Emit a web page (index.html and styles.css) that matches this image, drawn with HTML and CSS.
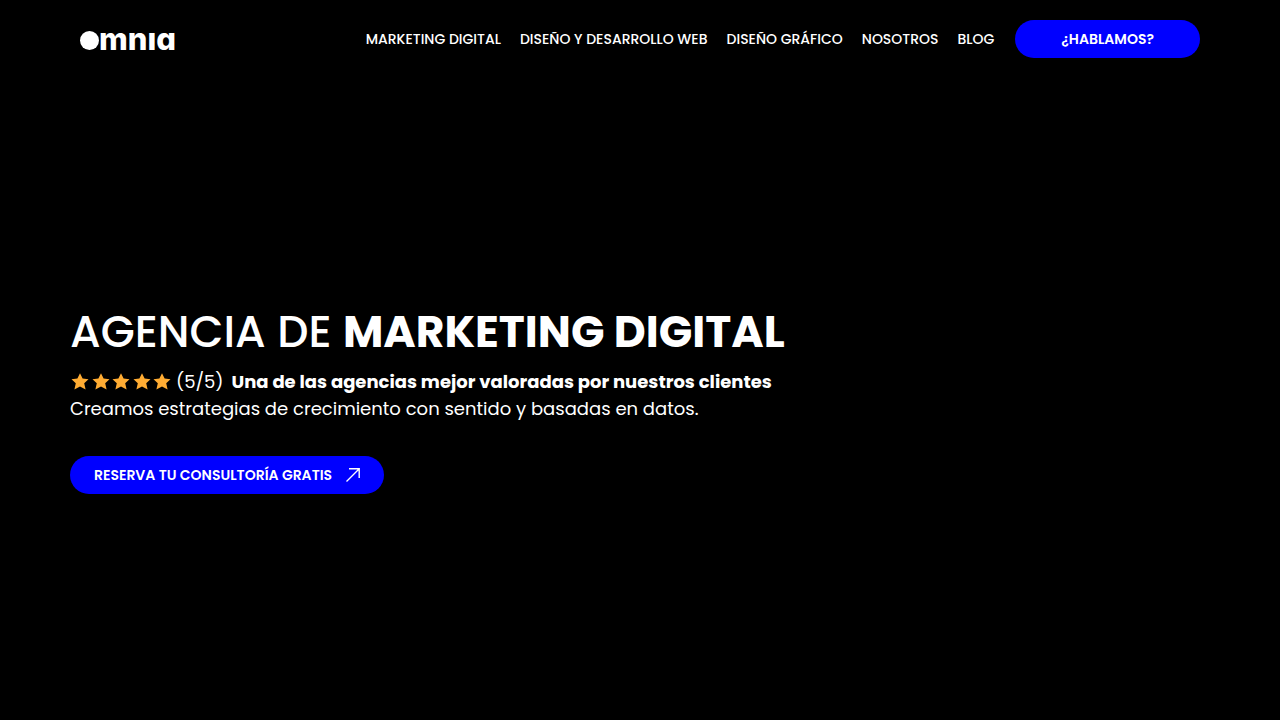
FILE: index.html
```html
<!DOCTYPE html>
<html lang="es">
<head>
<meta charset="utf-8">
<meta name="viewport" content="width=device-width, initial-scale=1">
<title>Omnia | Agencia de Marketing Digital</title>
<link rel="stylesheet" href="styles.css">
</head>
<body>
<header class="header">
  <a class="logo" href="#" aria-label="omnia"><span class="logo-dot"></span><span class="logo-text">mnıa</span></a>
  <nav class="nav">
    <a class="nav-link" href="#">MARKETING DIGITAL</a>
    <a class="nav-link" href="#">DISEÑO Y DESARROLLO WEB</a>
    <a class="nav-link" href="#">DISEÑO GRÁFICO</a>
    <a class="nav-link" href="#">NOSOTROS</a>
    <a class="nav-link" href="#">BLOG</a>
    <a class="button button-talk" href="#">¿HABLAMOS?</a>
  </nav>
</header>
<main class="hero">
  <h1 class="title">AGENCIA DE <strong>MARKETING DIGITAL</strong></h1>
  <p class="rating">
    <svg class="stars" viewBox="0 0 103 18" role="img" aria-label="5 estrellas">
      <defs><path id="star" d="M10 .3 L12.6 5.6 L18.5 6.2 L14.2 10.3 L15.6 16.6 L10 13.4 L4.4 16.6 L5.8 10.3 L1.5 6.2 L7.4 5.6 Z"/></defs>
      <use href="#star"/><use href="#star" x="21"/><use href="#star" x="41"/><use href="#star" x="62"/><use href="#star" x="82"/>
    </svg>
    <span class="score">(5/5)</span>
    <strong class="claim">Una de las agencias mejor valoradas por nuestros clientes</strong>
  </p>
  <p class="lead">Creamos estrategias de crecimiento con sentido y basadas en datos.</p>
  <a class="button button-book" href="#">RESERVA TU CONSULTORÍA GRATIS
    <svg class="arrow" viewBox="0 0 15 16" aria-hidden="true"><path d="M1.5 14.5 L14 2 M4 1.8 H14.2 V11"/></svg>
  </a>
</main>
</body>
</html>
```
FILE: styles.css
```css
* {
  box-sizing: border-box;
}

body {
  margin: 0;
  min-height: 100vh;
  display: flex;
  flex-direction: column;
  background: #000;
  color: #fff;
  font-family: Poppins, Inter, "Open Sans", sans-serif;
}

a {
  color: inherit;
  text-decoration: none;
}

.header {
  display: flex;
  align-items: center;
  justify-content: space-between;
  padding: 20px 80px;
}

.logo {
  display: flex;
  align-items: center;
  height: 38px;
}

.logo-dot {
  width: 19px;
  height: 19px;
  margin-top: 2px;
  border-radius: 50%;
  background: #fff;
}

.logo-text {
  font-family: Inter, sans-serif;
  font-feature-settings: "cv11";
  font-size: 31px;
  line-height: 32px;
  font-weight: 800;
}

.nav {
  display: flex;
  align-items: center;
  gap: 19px;
}

.nav-link {
  font-size: 14px;
  font-weight: 500;
  white-space: nowrap;
}

.button {
  display: inline-flex;
  align-items: center;
  justify-content: center;
  height: 38px;
  border-radius: 19px;
  background: #00f;
  font-size: 14px;
  font-weight: 600;
  white-space: nowrap;
}

.button-talk {
  margin-left: 2px;
  padding: 0 46px;
}

.hero {
  flex: 1;
  display: flex;
  flex-direction: column;
  align-items: flex-start;
  justify-content: center;
  padding: 0 70px;
}

.title {
  margin: 0 0 8px;
  font-size: 44px;
  line-height: 56px;
  font-weight: 500;
}

.title strong {
  font-weight: 700;
}

.rating {
  display: flex;
  align-items: center;
  margin: 0;
  font-size: 18px;
  line-height: 27px;
}

.stars {
  width: 103px;
  height: 18px;
  margin-right: 3px;
  fill: #ffac33;
}

.claim {
  margin-left: 8px;
}

.lead {
  margin: 0 0 34px;
  font-size: 18px;
  line-height: 27px;
}

.button-book {
  gap: 13px;
  padding: 0 24px;
}

.arrow {
  width: 15px;
  height: 16px;
  fill: none;
  stroke: #fff;
  stroke-width: 1.4;
}
```
